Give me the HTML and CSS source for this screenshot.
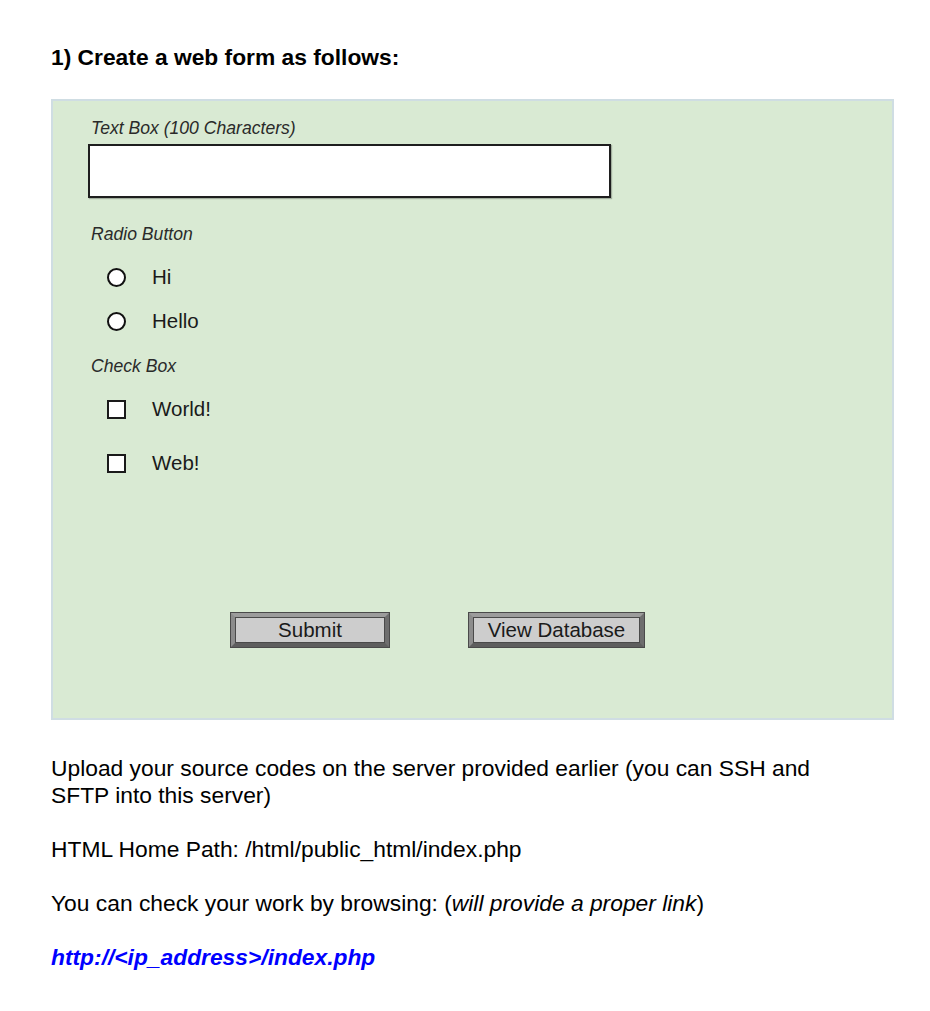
FILE: index.html
```html
<!DOCTYPE html>
<html>
<head>
<meta charset="utf-8">
<link rel="stylesheet" href="styles.css">
</head>
<body>
<div class="page">
  <h1 class="title">1) Create a web form as follows:</h1>
  <div class="panel">
    <div class="label lbl-text">Text Box (100 Characters)</div>
    <div class="textbox"></div>
    <div class="label lbl-radio">Radio Button</div>
    <div class="opt opt-r1"><span class="radio"></span><span class="opt-text">Hi</span></div>
    <div class="opt opt-r2"><span class="radio"></span><span class="opt-text">Hello</span></div>
    <div class="label lbl-check">Check Box</div>
    <div class="opt opt-c1"><span class="check"></span><span class="opt-text">World!</span></div>
    <div class="opt opt-c2"><span class="check"></span><span class="opt-text">Web!</span></div>
    <div class="buttons">
      <div class="btn btn-submit">Submit</div>
      <div class="btn btn-view">View Database</div>
    </div>
  </div>
  <div class="text">
    <p>Upload your source codes on the server provided earlier (you can SSH and SFTP into this server)</p>
    <p>HTML Home Path: /html/public_html/index.php</p>
    <p>You can check your work by browsing: (<em>will provide a proper link</em>)</p>
    <p class="link">http://&lt;ip_address&gt;/index.php</p>
  </div>
</div>
</body>
</html>
```

FILE: styles.css
```css
html, body {
  margin: 0;
  padding: 0;
  background: #ffffff;
}
body {
  font-family: "Liberation Sans", Arial, sans-serif;
  color: #000;
}
.page {
  padding: 0 0 0 51px;
}
.title {
  margin: 0;
  padding-top: 45px;
  font-size: 22.8px;
  line-height: 24px;
  font-weight: bold;
  color: #000;
}
.panel {
  margin-top: 30px;
  width: 804px;
  border: 2px solid #cfdde3;
  background: #d9ead3;
  padding: 0 0 71px 35px;
  box-sizing: content-box;
}
.label {
  font-style: italic;
  font-size: 17.6px;
  line-height: 20px;
  color: #2a2a2a;
  padding-left: 3px;
}
.lbl-text { margin-top: 17px; }
.textbox {
  margin-top: 6px;
  width: 519px;
  height: 50px;
  background: #fff;
  border: 2px solid #1e1e1e;
  box-shadow: 1px 1px 1px rgba(0,0,0,0.25);
}
.lbl-radio { margin-top: 26px; }
.lbl-check { margin-top: 20px; }
.opt {
  display: flex;
  align-items: center;
  height: 30px;
  padding-left: 19px;
}
.opt-r1 { margin-top: 18px; }
.opt-r2 { margin-top: 14px; }
.opt-c1 { margin-top: 18px; }
.opt-c2 { margin-top: 24px; }
.radio {
  width: 15px;
  height: 15px;
  border: 2px solid #111;
  border-radius: 50%;
  background: #fff;
  flex: none;
}
.check {
  width: 15px;
  height: 15px;
  border: 2px solid #1a1a1a;
  background: #fff;
  flex: none;
}
.opt-text {
  margin-left: 26px;
  font-size: 20.5px;
  color: #1a1a1a;
}
.buttons {
  display: flex;
  margin-top: 135px;
  padding-left: 143px;
  gap: 80px;
}
.btn {
  box-sizing: border-box;
  height: 34px;
  border: 4px solid;
  border-color: #9c9c9c #6e6e6e #5e5e5e #8c8c8c;
  box-shadow: 0 0 0 1px #4a4a4a, inset 0 0 0 1px #4a4a4a;
  background: #cdcdcd;
  font-size: 20.5px;
  line-height: 26px;
  text-align: center;
  color: #1a1a1a;
}
.btn-submit { width: 158px; }
.btn-view { width: 175px; }
.text {
  margin-top: 35px;
  width: 790px;
  font-size: 22.8px;
  line-height: 27px;
}
.text p {
  margin: 0 0 27px 0;
}
.link {
  color: #0000ff;
  font-weight: bold;
  font-style: italic;
}
```
